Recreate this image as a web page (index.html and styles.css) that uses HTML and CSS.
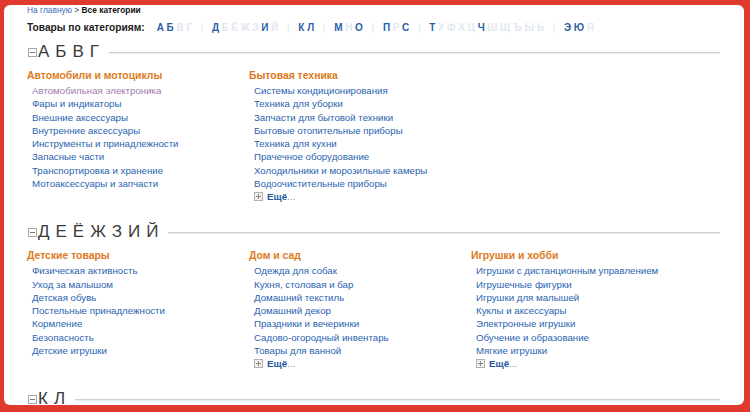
FILE: index.html
```html
<!DOCTYPE html>
<html lang="ru">
<head>
<meta charset="utf-8">
<title>Все категории</title>
<link rel="stylesheet" href="styles.css">
</head>
<body>
<div class="page">
  <div class="crumbs"><a href="#" class="crumb-link">На главную</a> <span class="crumb-sep">&gt;</span> <b class="crumb-current">Все категории</b></div>

  <div class="letters">
    <span class="letters-title">Товары по категориям:</span>
    <nav class="abc">
      <a href="#" class="l">А</a><a href="#" class="l">Б</a><span class="l off">В</span><span class="l off">Г</span><span class="bar">|</span>
      <a href="#" class="l">Д</a><span class="l off">Е</span><span class="l off">Ё</span><span class="l off">Ж</span><span class="l off">З</span><a href="#" class="l">И</a><span class="l off">Й</span><span class="bar">|</span>
      <a href="#" class="l">К</a><a href="#" class="l">Л</a><span class="bar">|</span>
      <a href="#" class="l">М</a><span class="l off">Н</span><a href="#" class="l">О</a><span class="bar">|</span>
      <a href="#" class="l">П</a><span class="l off">Р</span><a href="#" class="l">С</a><span class="bar">|</span>
      <a href="#" class="l">Т</a><span class="l off">У</span><span class="l off">Ф</span><span class="l off">Х</span><span class="l off">Ц</span><a href="#" class="l">Ч</a><span class="l off">Ш</span><span class="l off">Щ</span><span class="l off">Ъ</span><span class="l off">Ы</span><span class="l off">Ь</span><span class="bar">|</span>
      <a href="#" class="l">Э</a><a href="#" class="l">Ю</a><span class="l off">Я</span>
    </nav>
  </div>

  <section class="group">
    <h2 class="group-head">
      <svg class="toggle" viewBox="0 0 9 9" width="9" height="9"><rect x="0.5" y="0.5" width="8" height="8" fill="#fff" stroke="#a9a9a9"/><line x1="2" y1="4.5" x2="7" y2="4.5" stroke="#777"/></svg>
      <span class="group-name">АБВГ</span>
      <span class="rule"></span>
    </h2>
    <div class="cols">
      <div class="col">
        <h3 class="cat">Автомобили и мотоциклы</h3>
        <ul class="links">
          <li><a href="#" class="visited">Автомобильная электроника</a></li>
          <li><a href="#">Фары и индикаторы</a></li>
          <li><a href="#">Внешние аксессуары</a></li>
          <li><a href="#">Внутренние аксессуары</a></li>
          <li><a href="#">Инструменты и принадлежности</a></li>
          <li><a href="#">Запасные части</a></li>
          <li><a href="#">Транспортировка и хранение</a></li>
          <li><a href="#">Мотоаксессуары и запчасти</a></li>
        </ul>
      </div>
      <div class="col">
        <h3 class="cat">Бытовая техника</h3>
        <ul class="links">
          <li><a href="#">Системы кондиционирования</a></li>
          <li><a href="#">Техника для уборки</a></li>
          <li><a href="#">Запчасти для бытовой техники</a></li>
          <li><a href="#">Бытовые отопительные приборы</a></li>
          <li><a href="#">Техника для кухни</a></li>
          <li><a href="#">Прачечное оборудование</a></li>
          <li><a href="#">Холодильники и морозильные камеры</a></li>
          <li><a href="#">Водоочистительные приборы</a></li>
          <li class="more"><svg class="plus" viewBox="0 0 9 9" width="9" height="9"><rect x="0.5" y="0.5" width="8" height="8" fill="#f0f0f0" stroke="#b0b0b0"/><line x1="2" y1="4.5" x2="7" y2="4.5" stroke="#888"/><line x1="4.5" y1="2" x2="4.5" y2="7" stroke="#888"/></svg><a href="#" class="more-link">Ещё<span class="dots">...</span></a></li>
        </ul>
      </div>
    </div>
  </section>

  <section class="group">
    <h2 class="group-head">
      <svg class="toggle" viewBox="0 0 9 9" width="9" height="9"><rect x="0.5" y="0.5" width="8" height="8" fill="#fff" stroke="#a9a9a9"/><line x1="2" y1="4.5" x2="7" y2="4.5" stroke="#777"/></svg>
      <span class="group-name">ДЕЁЖЗИЙ</span>
      <span class="rule"></span>
    </h2>
    <div class="cols">
      <div class="col">
        <h3 class="cat">Детские товары</h3>
        <ul class="links">
          <li><a href="#">Физическая активность</a></li>
          <li><a href="#">Уход за малышом</a></li>
          <li><a href="#">Детская обувь</a></li>
          <li><a href="#">Постельные принадлежности</a></li>
          <li><a href="#">Кормление</a></li>
          <li><a href="#">Безопасность</a></li>
          <li><a href="#">Детские игрушки</a></li>
        </ul>
      </div>
      <div class="col">
        <h3 class="cat">Дом и сад</h3>
        <ul class="links">
          <li><a href="#">Одежда для собак</a></li>
          <li><a href="#">Кухня, столовая и бар</a></li>
          <li><a href="#">Домашний текстиль</a></li>
          <li><a href="#">Домашний декор</a></li>
          <li><a href="#">Праздники и вечеринки</a></li>
          <li><a href="#">Садово-огородный инвентарь</a></li>
          <li><a href="#">Товары для ванной</a></li>
          <li class="more"><svg class="plus" viewBox="0 0 9 9" width="9" height="9"><rect x="0.5" y="0.5" width="8" height="8" fill="#f0f0f0" stroke="#b0b0b0"/><line x1="2" y1="4.5" x2="7" y2="4.5" stroke="#888"/><line x1="4.5" y1="2" x2="4.5" y2="7" stroke="#888"/></svg><a href="#" class="more-link">Ещё<span class="dots">...</span></a></li>
        </ul>
      </div>
      <div class="col">
        <h3 class="cat">Игрушки и хобби</h3>
        <ul class="links">
          <li><a href="#">Игрушки с дистанционным управлением</a></li>
          <li><a href="#">Игрушечные фигурки</a></li>
          <li><a href="#">Игрушки для малышей</a></li>
          <li><a href="#">Куклы и аксессуары</a></li>
          <li><a href="#">Электронные игрушки</a></li>
          <li><a href="#">Обучение и образование</a></li>
          <li><a href="#">Мягкие игрушки</a></li>
          <li class="more"><svg class="plus" viewBox="0 0 9 9" width="9" height="9"><rect x="0.5" y="0.5" width="8" height="8" fill="#f0f0f0" stroke="#b0b0b0"/><line x1="2" y1="4.5" x2="7" y2="4.5" stroke="#888"/><line x1="4.5" y1="2" x2="4.5" y2="7" stroke="#888"/></svg><a href="#" class="more-link">Ещё<span class="dots">...</span></a></li>
        </ul>
      </div>
    </div>
  </section>

  <section class="group">
    <h2 class="group-head">
      <svg class="toggle" viewBox="0 0 9 9" width="9" height="9"><rect x="0.5" y="0.5" width="8" height="8" fill="#fff" stroke="#a9a9a9"/><line x1="2" y1="4.5" x2="7" y2="4.5" stroke="#777"/></svg>
      <span class="group-name">КЛ</span>
      <span class="rule"></span>
    </h2>
  </section>
</div>
</body>
</html>
```

FILE: styles.css
```css
html, body {
  margin: 0;
  height: 100%;
  overflow: hidden;
}

body {
  background: #e03a2f;
  font-family: "Liberation Sans", Arial, sans-serif;
}

.page {
  margin: 5px 6px 0 4px;
  height: 400px;
  background: #fff;
  border-radius: 6px;
  overflow: hidden;
  padding: 0 24px 0 23px;
  box-sizing: border-box;
}

a {
  text-decoration: none;
  color: #2a63b0;
}

.crumbs {
  font-size: 8.4px;
  line-height: 10px;
  color: #333;
}

.crumb-link {
  color: #3b6fb6;
}

.crumb-sep {
  color: #444;
}

.crumb-current {
  color: #111;
}

.letters {
  display: flex;
  align-items: center;
  margin-top: 5px;
  height: 14px;
}

.letters-title {
  font-size: 10.2px;
  font-weight: bold;
  color: #222;
  margin-right: 12px;
}

.abc {
  display: flex;
  align-items: center;
  gap: 2.7px;
  font-size: 10px;
  font-weight: bold;
}

.l {
  color: #2d5fa5;
}

.l.off {
  color: #e3e8f0;
}

.bar {
  color: #e4e4e4;
  font-weight: normal;
  margin: 0 6px;
}

.group {
  margin-bottom: 18px;
}

.group-head {
  display: flex;
  align-items: center;
  height: 22px;
  margin: 7px 0 0;
  font-weight: normal;
}

.group + .group .group-head {
  margin-top: 0;
}

.toggle {
  display: block;
  margin-left: 1px;
  margin-right: 1px;
  margin-top: 1px;
}

.group-name {
  font-size: 17px;
  letter-spacing: 6px;
  color: #3a3a3a;
  line-height: 22px;
}

.rule {
  flex: 1;
  height: 1px;
  background: #cfcfcf;
  margin-left: 4px;
  box-shadow: 0 1px 0 #ececec;
}

.cols {
  display: grid;
  grid-template-columns: 222px 222px 222px;
}

.cat {
  margin: 6px 0 0;
  font-size: 10.4px;
  line-height: 14px;
  font-weight: bold;
  color: #dd7a1c;
}

.links {
  list-style: none;
  margin: 1px 0 0;
  padding: 0 0 0 5px;
  font-size: 9.7px;
  line-height: 13.25px;
}

.links a {
  color: #2a63b0;
}

.links a.visited {
  color: #a07aa8;
}

.more {
  display: flex;
  align-items: center;
  gap: 4px;
}

.plus {
  display: block;
}

.links .more-link {
  font-weight: bold;
  color: #24579f;
}

.dots {
  font-weight: normal;
  color: #6d8fc0;
}
```
